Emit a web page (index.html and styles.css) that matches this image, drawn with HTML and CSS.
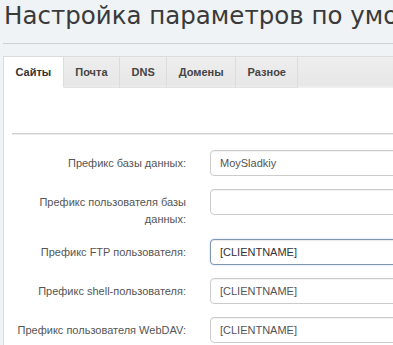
FILE: index.html
```html
<!DOCTYPE html>
<html lang="ru">
<head>
    <meta charset="UTF-8">
    <meta name="viewport" content="width=device-width, initial-scale=1.0">
    <title>Настройка параметров по умолчанию</title>
    <link rel="stylesheet" href="styles.css">
</head>
<body>
    <main class="page">
        <h1 class="page-title">Настройка параметров по умолчанию</h1>

        <div class="panel">
            <ul class="tabs">
                <li class="tab active">Сайты</li>
                <li class="tab">Почта</li>
                <li class="tab">DNS</li>
                <li class="tab">Домены</li>
                <li class="tab">Разное</li>
            </ul>

            <div class="panel-body">
                <div class="divider"></div>
                <form class="settings-form">
                    <div class="form-row">
                        <label for="dbPrefix">Префикс базы данных:</label>
                        <input type="text" id="dbPrefix" value="MoySladkiy">
                    </div>
                    <div class="form-row">
                        <label for="dbUserPrefix" class="multi">Префикс пользователя базы данных:</label>
                        <input type="text" id="dbUserPrefix" value="">
                    </div>
                    <div class="form-row">
                        <label for="ftpPrefix">Префикс FTP пользователя:</label>
                        <input type="text" id="ftpPrefix" class="active-input" value="[CLIENTNAME]">
                    </div>
                    <div class="form-row">
                        <label for="shellPrefix">Префикс shell-пользователя:</label>
                        <input type="text" id="shellPrefix" value="[CLIENTNAME]">
                    </div>
                    <div class="form-row">
                        <label for="davPrefix">Префикс пользователя WebDAV:</label>
                        <input type="text" id="davPrefix" value="[CLIENTNAME]">
                    </div>
                </form>
            </div>
        </div>
    </main>
</body>
</html>
```

FILE: styles.css
```css
:root {
    --page-bg: #eff3f6;
    --border: #dcdcdc;
    --text: #333;
    --label: #555;
}

* {
    margin: 0;
    padding: 0;
    box-sizing: border-box;
}

body {
    background-color: var(--page-bg);
    font-family: 'Liberation Sans', Arial, sans-serif;
    color: var(--text);
    overflow: hidden;
    height: 345px;
}

.page {
    padding-left: 3px;
    width: 600px;
}

.page-title {
    font-family: 'DejaVu Sans', 'Liberation Sans', sans-serif;
    font-size: 24.5px;
    font-weight: normal;
    line-height: 30px;
    color: #3a3a3a;
    white-space: nowrap;
    padding: 1px 0 12px 1px;
    border-bottom: 1px solid #cdd1d4;
}

.panel {
    margin-top: 12px;
    background: white;
    border-left: 1px solid var(--border);
    min-height: 300px;
}

.tabs {
    list-style: none;
    display: flex;
    height: 32px;
    border-top: 1px solid var(--border);
    background: linear-gradient(#eeeeee, #e7e7e7 90%, #f2f2f2);
}

.tab {
    padding: 0 11.5px;
    line-height: 31px;
    font-size: 11px;
    font-weight: bold;
    color: #444;
    border-right: 1px solid var(--border);
    border-bottom: 1px solid #e2e2e2;
}

.tab.active {
    background: white;
    color: #333;
    border-bottom-color: white;
}

.panel-body {
    padding: 45px 0 0 8px;
}

.divider {
    border-top: 1px solid #cfcfcf;
    border-bottom: 1px solid #ececec;
    margin-bottom: 15px;
}

.form-row {
    display: flex;
    align-items: flex-start;
    gap: 24px;
    margin-bottom: 13px;
}

.form-row label {
    width: 174px;
    flex-shrink: 0;
    text-align: right;
    font-size: 11px;
    line-height: 17px;
    padding-top: 5px;
    color: var(--label);
}

.form-row label.multi {
    margin-bottom: -2px;
}

.form-row input {
    width: 260px;
    height: 26px;
    padding: 0 9px;
    border: 1px solid #cccccc;
    border-radius: 4px;
    font-family: 'Liberation Sans', Arial, sans-serif;
    font-size: 11px;
    color: #555;
    background: white;
    box-shadow: inset 0 1px 1px rgba(0,0,0,0.06);
}

.form-row input.active-input {
    border-color: #7f97b3;
    box-shadow: inset 0 1px 1px rgba(0,0,0,0.08), 0 0 2px rgba(102,140,190,0.4);
    color: #333;
}
```
